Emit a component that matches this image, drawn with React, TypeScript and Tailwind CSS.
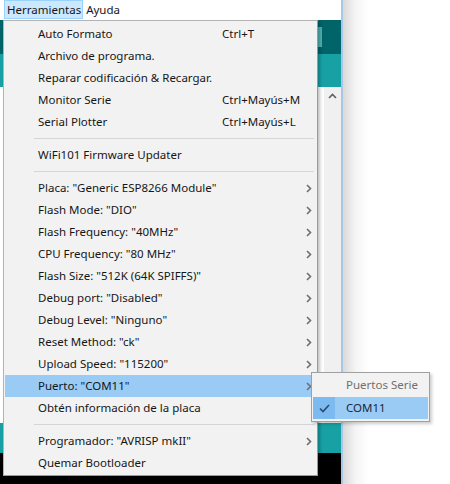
import React from "react";

const Chevron = () => (
  <svg width="6" height="9" viewBox="0 0 6 9" className="block">
    <path d="M1 1 L4.5 4.5 L1 8" fill="none" stroke="#6f6f6f" strokeWidth="1.6" />
  </svg>
);

type Item =
  | { kind: "item"; label: string; shortcut?: string; sub?: boolean; active?: boolean }
  | { kind: "sep" };

const items: Item[] = [
  { kind: "item", label: "Auto Formato", shortcut: "Ctrl+T" },
  { kind: "item", label: "Archivo de programa." },
  { kind: "item", label: "Reparar codificación & Recargar." },
  { kind: "item", label: "Monitor Serie", shortcut: "Ctrl+Mayús+M" },
  { kind: "item", label: "Serial Plotter", shortcut: "Ctrl+Mayús+L" },
  { kind: "sep" },
  { kind: "item", label: "WiFi101 Firmware Updater" },
  { kind: "sep" },
  { kind: "item", label: 'Placa: "Generic ESP8266 Module"', sub: true },
  { kind: "item", label: 'Flash Mode: "DIO"', sub: true },
  { kind: "item", label: 'Flash Frequency: "40MHz"', sub: true },
  { kind: "item", label: 'CPU Frequency: "80 MHz"', sub: true },
  { kind: "item", label: 'Flash Size: "512K (64K SPIFFS)"', sub: true },
  { kind: "item", label: 'Debug port: "Disabled"', sub: true },
  { kind: "item", label: 'Debug Level: "Ninguno"', sub: true },
  { kind: "item", label: 'Reset Method: "ck"', sub: true },
  { kind: "item", label: 'Upload Speed: "115200"', sub: true },
  { kind: "item", label: 'Puerto: "COM11"', sub: true, active: true },
  { kind: "item", label: "Obtén información de la placa" },
  { kind: "sep" },
  { kind: "item", label: 'Programador: "AVRISP mkII"', sub: true },
  { kind: "item", label: "Quemar Bootloader" },
];

export default function App() {
  return (
    <div
      className="relative w-[450px] h-[484px] overflow-hidden bg-white text-[11.5px] text-[#161616]"
      style={{ fontFamily: '"Noto Sans", "Open Sans", sans-serif' }}
    >
      {/* background: IDE window + desktop */}
      <div className="flex h-full">
        <div className="flex flex-col w-[341px] h-full">
          {/* menu bar */}
          <div className="h-[20px] bg-white flex items-start pl-[4px]">
            <div className="h-[19px] pl-[2px] pr-[1px] flex items-center bg-[#cce8ff] border border-[#99d1ff] leading-none">
              Herramientas
            </div>
            <div className="h-[19px] px-[3px] flex items-center leading-none">Ayuda</div>
          </div>
          {/* toolbar */}
          <div className="h-[34px] bg-[#006468] flex items-center justify-end pr-[19px]">
            <div className="w-[14px] h-[20px] bg-[#4fb3b3]" />
          </div>
          {/* tabs strip */}
          <div className="h-[33px] bg-[#17a1a5]" />
          {/* editor */}
          <div className="flex-1 flex bg-[#f7f7f7]">
            <div className="flex-1 bg-white" />
            <div className="w-[17px] bg-[#f0f0f0] flex justify-center pt-[6px]">
              <svg width="9" height="6" viewBox="0 0 9 6">
                <path d="M1 5 L4.5 1.5 L8 5" fill="none" stroke="#606060" strokeWidth="1.6" />
              </svg>
            </div>
          </div>
          {/* status */}
          <div className="h-[30px] bg-[#17a1a5]" />
          {/* console */}
          <div className="h-[31px] bg-black" />
        </div>
        <div className="w-[2px] h-full bg-[#a9c6e6]" />
        <div className="flex-1 h-full bg-[linear-gradient(to_right,#d9d9d9,#f4f4f4_12px,#ffffff_26px)]" />
      </div>

      {/* dropdown menu */}
      <div className="absolute left-[3px] top-[20px] w-[315px] bg-[#f2f2f2] border border-[#b4b4b4] border-r-[#9a9a9a] border-b-[#9a9a9a] shadow-[2px_2px_3px_rgba(0,0,0,0.25)] pt-[2px] pb-[1px] px-[1px]">
        {items.map((it, i) =>
          it.kind === "sep" ? (
            <div key={i} className="h-[11px] flex items-center pl-[29px] pr-[2px]">
              <div className="h-px w-full bg-[#d5d5d5]" />
            </div>
          ) : (
            <div
              key={i}
              className={`h-[22px] flex items-center pl-[33px] pr-[4px] ${
                it.active ? "bg-[#99cbf5]" : ""
              }`}
            >
              <span className="w-[184px] whitespace-nowrap">{it.label}</span>
              <span className="flex-1 whitespace-nowrap">{it.shortcut ?? ""}</span>
              {it.sub ? <Chevron /> : null}
            </div>
          )
        )}
      </div>

      {/* submenu */}
      <div className="absolute left-[311px] top-[372px] w-[119px] bg-[#f2f2f2] border border-[#a0a0a0] shadow-[2px_2px_3px_rgba(0,0,0,0.2)] px-[1px] pb-[2px]">
        <div className="h-[24px] flex items-center pl-[33px] text-[#707070]">Puertos Serie</div>
        <div className="h-[22px] flex bg-[#99cbf5]">
          <div className="w-[22px] bg-[#7cbaf0] flex items-center justify-center">
            <svg width="11" height="9" viewBox="0 0 11 9">
              <path d="M1 4.5 L4 7.5 L10 1" fill="none" stroke="#2a4a70" strokeWidth="1.6" />
            </svg>
          </div>
          <div className="flex items-center pl-[11px] text-[#1b2740]">COM11</div>
        </div>
      </div>
    </div>
  );
}
